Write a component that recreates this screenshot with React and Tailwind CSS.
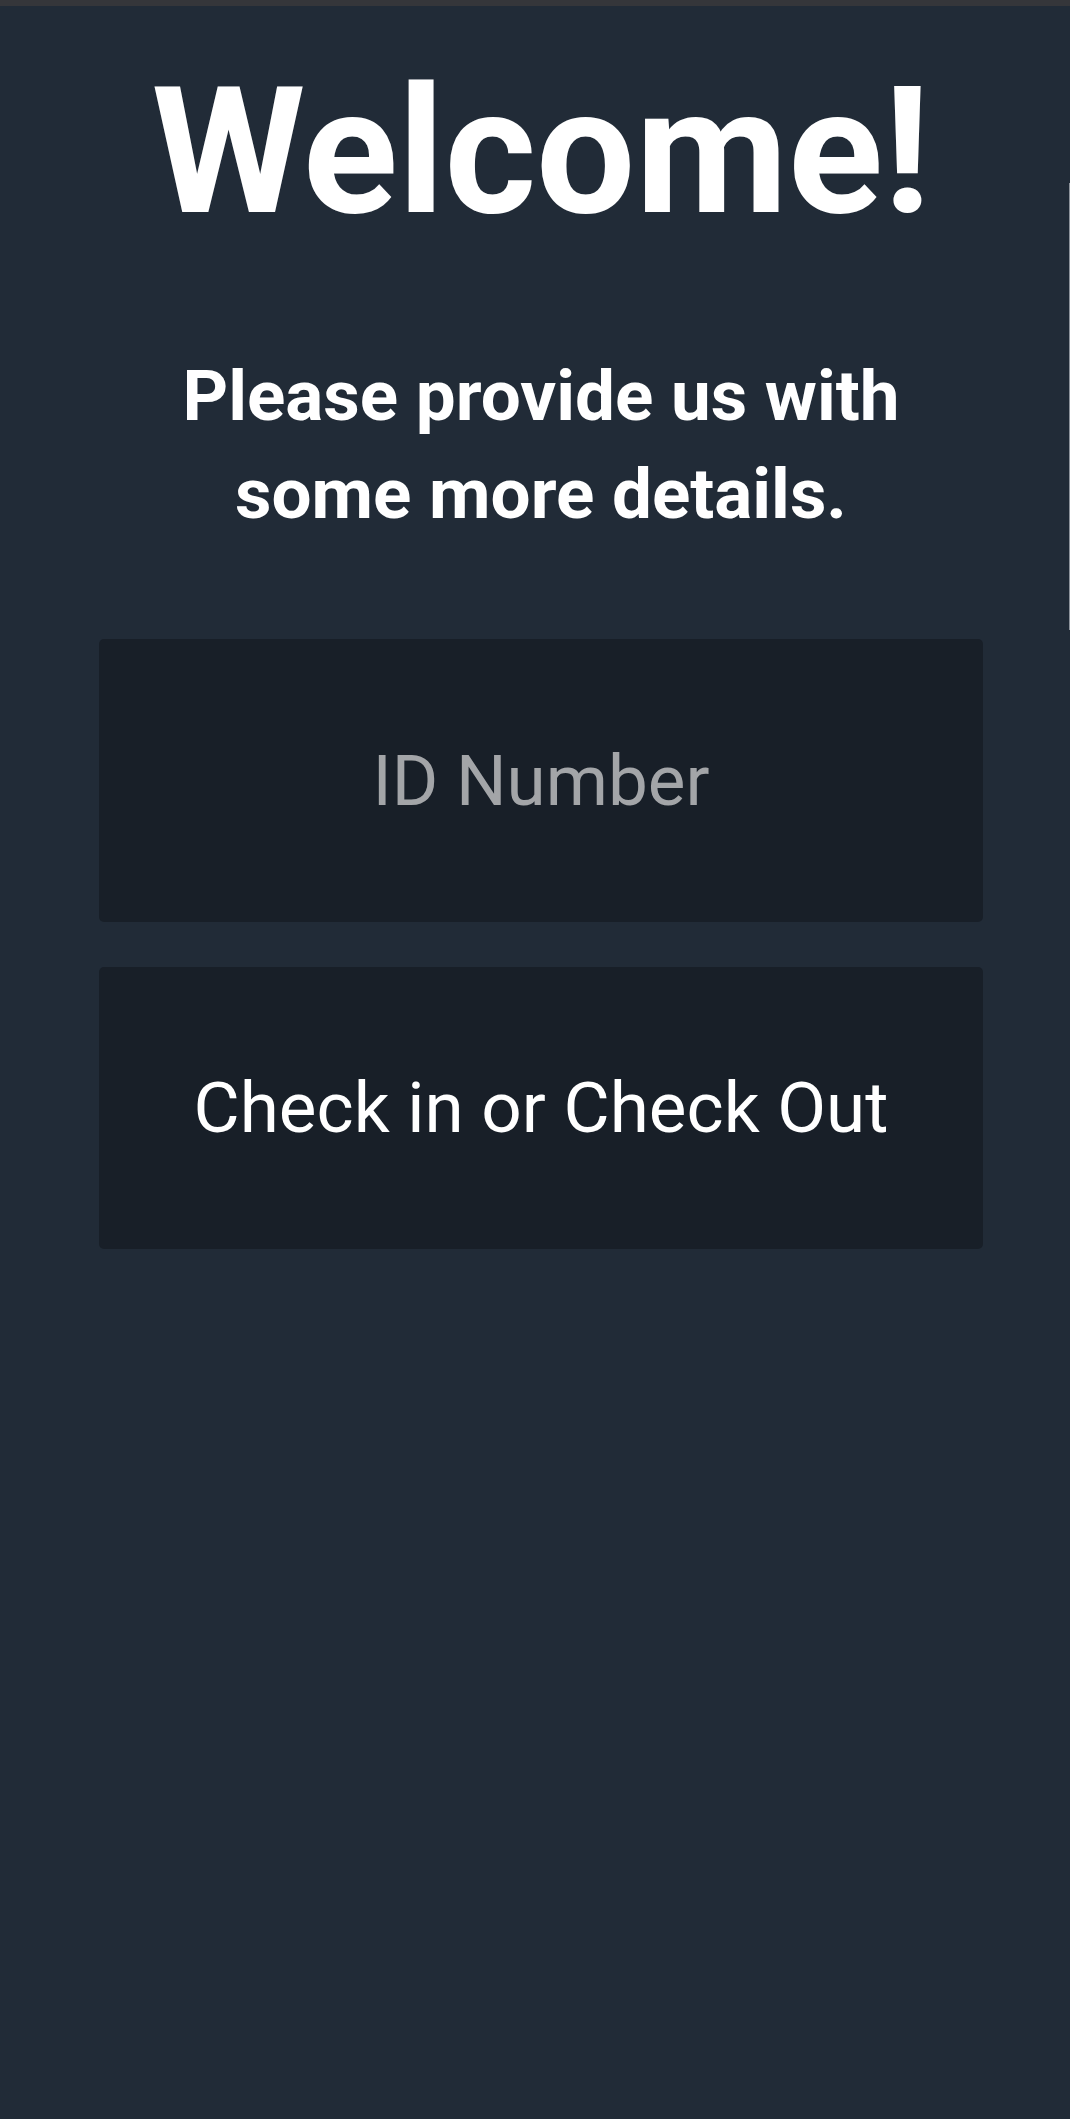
import React, { useState } from 'react';

const App = () => {
    const [idNumber, setIdNumber] = useState('');

    return (
        <div
            className="relative min-h-screen bg-[#212b37] overflow-hidden"
            style={{ fontFamily: 'Roboto, "Noto Sans", sans-serif' }}
        >
            {/* top strip */}
            <div className="h-[6px] bg-[#35363a]" />

            {/* scroll edge */}
            <div className="absolute right-0 top-[183px] h-[447px] w-px bg-[#8d939b]" />

            <div className="ml-[99px] w-[884px] flex flex-col items-center">
                <h1 className="mt-[58px] text-[176px] leading-none font-bold text-white text-center">
                    Welcome!
                </h1>

                <h2 className="mt-[107px] w-[770px] text-[71px] leading-[98px] font-bold text-white text-center">
                    Please provide us with some more details.
                </h2>

                <input
                    type="text"
                    value={idNumber}
                    onChange={(e) => setIdNumber(e.target.value)}
                    placeholder="ID Number"
                    className="mt-[96px] w-full h-[283px] rounded-[5px] bg-[#181f28] text-center text-[71px] text-white placeholder:text-[#a3a5a8] outline-none"
                />

                <button className="mt-[45px] w-full h-[282px] rounded-[5px] bg-[#181f28] text-center text-[71px] text-white">
                    Check in or Check Out
                </button>
            </div>
        </div>
    );
};

export default App;
